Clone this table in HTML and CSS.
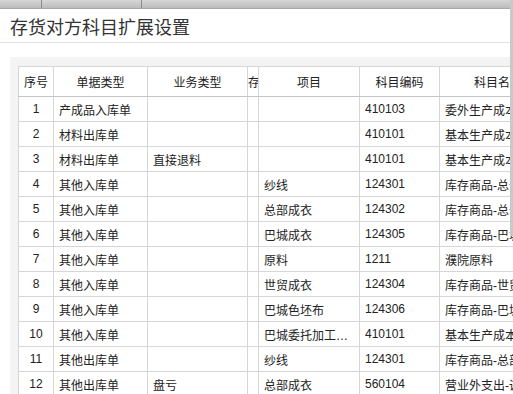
FILE: index.html
```html
<!DOCTYPE html>
<html lang="zh-CN">
<head>
<meta charset="utf-8">
<title>存货对方科目扩展设置</title>
<link rel="stylesheet" href="styles.css">
</head>
<body>
<div class="topbar">
  <div class="tab tab-a"></div>
  <div class="tab tab-b"></div>
  <div class="tab tab-c"></div>
</div>
<div class="edge"></div>
<header class="title-bar">
  <h1 class="title">存货对方科目扩展设置</h1>
</header>
<main class="panel">
  <table class="grid">
    <colgroup>
      <col class="c-no">
      <col class="c-bill">
      <col class="c-biz">
      <col class="c-inv">
      <col class="c-item">
      <col class="c-code">
      <col class="c-name">
    </colgroup>
    <thead>
      <tr>
        <th>序号</th>
        <th>单据类型</th>
        <th>业务类型</th>
        <th class="narrow">存货分类</th>
        <th>项目</th>
        <th>科目编码</th>
        <th class="name-head">科目名称</th>
      </tr>
    </thead>
    <tbody>
      <tr><td class="no">1</td><td>产成品入库单</td><td></td><td></td><td></td><td>410103</td><td class="name">委外生产成本</td></tr>
      <tr><td class="no">2</td><td>材料出库单</td><td></td><td></td><td></td><td>410101</td><td class="name">基本生产成本</td></tr>
      <tr><td class="no">3</td><td>材料出库单</td><td>直接退料</td><td></td><td></td><td>410101</td><td class="name">基本生产成本</td></tr>
      <tr><td class="no">4</td><td>其他入库单</td><td></td><td></td><td>纱线</td><td>124301</td><td class="name">库存商品-总部纱线</td></tr>
      <tr><td class="no">5</td><td>其他入库单</td><td></td><td></td><td>总部成衣</td><td>124302</td><td class="name">库存商品-总部成衣</td></tr>
      <tr><td class="no">6</td><td>其他入库单</td><td></td><td></td><td>巴城成衣</td><td>124305</td><td class="name">库存商品-巴城成衣</td></tr>
      <tr><td class="no">7</td><td>其他入库单</td><td></td><td></td><td>原料</td><td>1211</td><td class="name">濮院原料</td></tr>
      <tr><td class="no">8</td><td>其他入库单</td><td></td><td></td><td>世贸成衣</td><td>124304</td><td class="name">库存商品-世贸成衣</td></tr>
      <tr><td class="no">9</td><td>其他入库单</td><td></td><td></td><td>巴城色坯布</td><td>124306</td><td class="name">库存商品-巴城色坯布</td></tr>
      <tr><td class="no">10</td><td>其他入库单</td><td></td><td></td><td>巴城委托加工费用</td><td>410101</td><td class="name">基本生产成本</td></tr>
      <tr><td class="no">11</td><td>其他出库单</td><td></td><td></td><td>纱线</td><td>124301</td><td class="name">库存商品-总部纱线</td></tr>
      <tr><td class="no">12</td><td>其他出库单</td><td>盘亏</td><td></td><td>总部成衣</td><td>560104</td><td class="name">营业外支出-调整</td></tr>
    </tbody>
  </table>
</main>
</body>
</html>
```
FILE: styles.css
```css
html, body {
  margin: 0;
  padding: 0;
  overflow: hidden;
  background: #ffffff;
  font-family: "Liberation Sans", "Noto Sans CJK SC", sans-serif;
  color: #222;
}

body {
  position: relative;
  width: 513px;
  height: 394px;
}

.topbar {
  display: flex;
  height: 8px;
  background: linear-gradient(#d6d6d6, #bcbcbc);
  border-bottom: 1px solid #a8a8a8;
}

.tab {
  height: 100%;
}

.tab-a {
  width: 41px;
  border-right: 1px solid #8c8c8c;
}

.tab-b {
  width: 99px;
  border-right: 1px solid #8c8c8c;
}

.tab-c {
  flex: 1;
}

.edge {
  position: absolute;
  top: 0;
  right: 0;
  width: 3px;
  height: 236px;
  background: #c9c9c9;
  z-index: 2;
}

.title-bar {
  height: 33px;
  border-bottom: 1px solid #e0e0e0;
  display: flex;
  align-items: center;
  padding-left: 10px;
}

.title {
  margin: 0;
  font-family: "Noto Sans CJK SC", sans-serif;
  font-weight: 400;
  font-size: 18px;
  color: #333;
  letter-spacing: 0;
}

.panel {
  margin: 14px 0 0 10px;
  padding: 9px 0 0 8px;
  background: #f4f4f4;
  height: 400px;
}

.grid {
  border-collapse: collapse;
  table-layout: fixed;
  width: 601px;
  background: #fff;
  font-size: 12px;
  border: 1px solid #c4c4c4;
}

.c-no { width: 35px; }
.c-bill { width: 94px; }
.c-biz { width: 100px; }
.c-inv { width: 11px; }
.c-item { width: 101px; }
.c-code { width: 80px; }
.c-name { width: 180px; }

.grid th,
.grid td {
  border: 1px solid #d6d6d6;
  white-space: nowrap;
  overflow: hidden;
  text-overflow: ellipsis;
}

.grid th {
  height: 29px;
  padding: 0 4px;
  font-weight: 400;
  text-align: center;
  color: #222;
  border-bottom-color: #c4c4c4;
}

.grid th.narrow {
  padding: 0;
  text-overflow: clip;
  text-align: left;
}

.grid th.name-head {
  text-align: left;
  padding-left: 34px;
  text-overflow: clip;
}

.grid td {
  height: 24px;
  padding: 0 5px;
  color: #222;
}

.grid td.name {
  text-overflow: clip;
}

.grid td.no {
  text-align: center;
  padding: 0;
}
```
